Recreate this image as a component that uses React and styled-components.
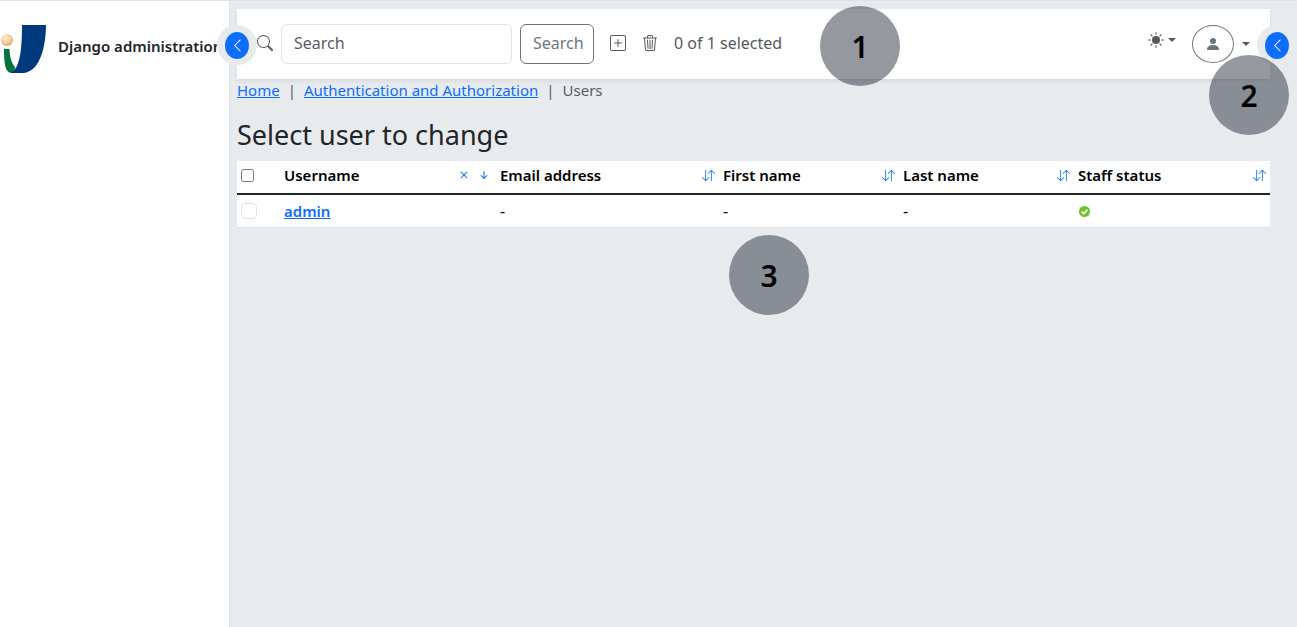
import React from "react";
import styled, { createGlobalStyle, css } from "styled-components";
import {
  BsArrowDownShort,
  BsArrowDownUp,
  BsChevronLeft,
  BsPersonFill,
  BsPlusSquare,
  BsSearch,
  BsSunFill,
  BsTrash3,
  BsX,
} from "react-icons/bs";

const GlobalStyle = createGlobalStyle`
  *, *::before, *::after { box-sizing: border-box; }
  body {
    margin: 0;
    background: #e8ebee;
    color: #212529;
    font-family: "Noto Sans", "Open Sans", sans-serif;
    font-size: 16px;
    line-height: 24px;
  }
  a { color: #0d6efd; }
  button, input { font: inherit; }
`;

const Page = styled.div`
  display: flex;
  min-height: 100vh;
  border-top: 1px solid #dee2e6;
`;

const Sidebar = styled.aside`
  position: relative;
  flex: 0 0 230px;
  background: #fff;
  border-right: 1px solid #dee2e6;
`;

const Brand = styled.a`
  display: flex;
  align-items: center;
  gap: 12px;
  padding-top: 24px;
  overflow: hidden;
  color: #212529;
  font-weight: 600;
  font-size: 15px;
  text-decoration: none;
  white-space: nowrap;
`;

const BrandName = styled.span`
  padding-bottom: 6px;
`;

const Logo = styled.svg`
  flex: none;
  width: 46px;
  height: 48px;
`;

const Toggle = styled.button`
  position: absolute;
  z-index: 2;
  top: 24px;
  right: ${(p) => (p.$side === "left" ? "-28px" : "0")};
  display: grid;
  place-items: center;
  width: 40px;
  height: 40px;
  padding: 0;
  border: 0;
  border-radius: 50%;
  background: #e8ebee;
  color: #fff;
`;

const ToggleDisc = styled.span`
  display: grid;
  place-items: center;
  width: 24px;
  height: 27px;
  border-radius: 50%;
  background: #0d6efd;
`;

const Main = styled.main`
  position: relative;
  flex: 1;
  min-width: 0;
  padding: 8px 27px 0 7px;
`;

const Toolbar = styled.header`
  display: flex;
  align-items: center;
  gap: 16px;
  height: 70px;
  padding: 0 20px;
  background: #fff;
  color: #55595c;
  box-shadow: 0 2px 4px rgba(0, 0, 0, 0.08);
`;

const SearchForm = styled.form`
  display: flex;
  align-items: center;
  gap: 8px;
`;

const SearchLabel = styled.label`
  display: flex;
  padding-bottom: 2px;
`;

const control = css`
  height: 40px;
  padding: 0 12px 2px;
  border-radius: 6px;
  background: #fff;
`;

const SearchInput = styled.input`
  ${control}
  width: 231px;
  border: 1px solid #dee2e6;
  &::placeholder { color: #595c5f; opacity: 1; }
`;

const SearchButton = styled.button`
  ${control}
  width: 74px;
  border: 1px solid #6c757d;
  color: #6c757d;
`;

const IconButton = styled.button`
  display: flex;
  align-items: center;
  padding: 0 0 2px;
  border: 0;
  background: none;
  color: inherit;
`;

const SelectionCount = styled.span`
  padding-bottom: 2px;
`;

const Menus = styled.div`
  display: flex;
  align-items: center;
  gap: 16px;
  margin-left: auto;
`;

const ThemeButton = styled(IconButton)`
  gap: 4px;
  padding-bottom: 8px;
`;

const UserButton = styled(IconButton)`
  gap: 8px;
  padding-bottom: 0;
`;

const Avatar = styled.span`
  display: grid;
  place-items: center;
  width: 42px;
  height: 38px;
  border: 1px solid #6c757d;
  border-radius: 50%;
  color: #6c757d;
`;

const Caret = styled.span`
  border-top: 4px solid #55595c;
  border-right: 4px solid transparent;
  border-left: 4px solid transparent;
`;

const Breadcrumb = styled.nav`
  display: flex;
  gap: 8px;
  margin-bottom: 18px;
  color: #595c5f;
  font-size: 15px;
  line-height: 22px;
`;

const Title = styled.h1`
  margin: 0 0 10px;
  font-size: 27px;
  font-weight: 400;
  line-height: 32px;
`;

const Table = styled.table`
  width: 100%;
  table-layout: fixed;
  border-collapse: separate;
  border-spacing: 0;
  background: #fff;
  color: #000;
`;

const Col = styled.col`
  width: ${(p) => p.$width};
`;

const HeadCell = styled.th`
  height: 34px;
  padding: 2px 4px 6px;
  border-bottom: 2px solid #212529;
  font-size: 15px;
  font-weight: 600;
  text-align: left;
`;

const Cell = styled.td`
  height: 33px;
  padding: 4px;
  border-bottom: 1px solid #dee2e6;
`;

const HeadContent = styled.div`
  display: flex;
  align-items: center;
  justify-content: space-between;
`;

const SortControls = styled.span`
  display: flex;
  align-items: center;
  gap: 4px;
`;

const SortLink = styled.a`
  display: flex;
`;

const HeadCheckbox = styled.input`
  display: block;
  width: 13px;
  height: 13px;
  margin: 0;
`;

const RowCheckbox = styled.input`
  appearance: none;
  display: block;
  width: 16px;
  height: 16px;
  margin: 0;
  border: 1px solid #dee2e6;
  border-radius: 4px;
  background: #fff;
`;

const UserLink = styled.a`
  font-size: 15px;
  font-weight: 600;
`;

const StatusIcon = styled.svg`
  display: block;
  width: 13px;
  height: 13px;
`;

const Marker = styled.div`
  position: absolute;
  z-index: 3;
  top: ${(p) => p.$top};
  left: ${(p) => p.$left};
  right: ${(p) => p.$right};
  width: 80px;
  height: 80px;
  border-radius: 50%;
  background: rgba(20, 28, 42, 0.45);
  color: #000;
  font-size: 30px;
  font-weight: 600;
  line-height: 82px;
  text-align: center;
`;

const columns = ["Email address", "First name", "Last name", "Staff status"];

function SortableHead({ name, sorted }) {
  return (
    <HeadCell scope="col">
      <HeadContent>
        {name}
        <SortControls>
          {sorted ? (
            <>
              <SortLink href="#clear" aria-label="Remove sorting"><BsX size={16} /></SortLink>
              <SortLink href="#sort" aria-label="Toggle sorting"><BsArrowDownShort size={16} /></SortLink>
            </>
          ) : (
            <SortLink href="#sort" aria-label={`Sort by ${name}`}><BsArrowDownUp size={13} /></SortLink>
          )}
        </SortControls>
      </HeadContent>
    </HeadCell>
  );
}

function PanelToggle({ side }) {
  return (
    <Toggle type="button" $side={side} aria-label={`Toggle ${side} panel`}>
      <ToggleDisc><BsChevronLeft size={15} /></ToggleDisc>
    </Toggle>
  );
}

export default function App() {
  return (
    <>
      <GlobalStyle />
      <Page>
        <Sidebar>
          <Brand href="#home">
            <Logo viewBox="0 0 46 48" aria-hidden="true">
              <defs>
                <radialGradient id="ball" cx="0.4" cy="0.35" r="0.65">
                  <stop offset="0" stopColor="#fff2e2" />
                  <stop offset="1" stopColor="#f1ac63" />
                </radialGradient>
              </defs>
              <path d="M4 24H9.500C9.800 32 11.500 38 15 42L14 48H11C5 47 4 38 4 24Z" fill="#007539" />
              <path d="M22 0H46C45.800 26 38 47.500 23 48H10C18 45 22 32 22 0Z" fill="#003a7d" />
              <circle cx="7" cy="15" r="6" fill="url(#ball)" />
            </Logo>
            <BrandName>Django administration</BrandName>
          </Brand>
          <PanelToggle side="left" />
        </Sidebar>
        <Main>
          <Toolbar>
            <SearchForm role="search">
              <SearchLabel htmlFor="searchbar" aria-label="Search"><BsSearch size={16} /></SearchLabel>
              <SearchInput id="searchbar" type="text" placeholder="Search" />
              <SearchButton type="button">Search</SearchButton>
            </SearchForm>
            <IconButton type="button" aria-label="Add user"><BsPlusSquare size={16} /></IconButton>
            <IconButton type="button" aria-label="Delete selected"><BsTrash3 size={16} /></IconButton>
            <SelectionCount>0 of 1 selected</SelectionCount>
            <Menus>
              <ThemeButton type="button" aria-label="Theme"><BsSunFill size={16} /><Caret /></ThemeButton>
              <UserButton type="button" aria-label="Account">
                <Avatar><BsPersonFill size={16} /></Avatar>
                <Caret />
              </UserButton>
            </Menus>
          </Toolbar>
          <Breadcrumb aria-label="Breadcrumb">
            <a href="#home">Home</a>
            <span>|</span>
            <a href="#auth">Authentication and Authorization</a>
            <span>|</span>
            <span>Users</span>
          </Breadcrumb>
          <Title>Select user to change</Title>
          <Table>
            <colgroup>
              <Col $width="43px" />
              <Col $width="216px" />
              <Col $width="223px" />
              <Col $width="180px" />
              <Col $width="175px" />
              <Col $width="auto" />
            </colgroup>
            <thead>
              <tr>
                <HeadCell scope="col"><HeadCheckbox type="checkbox" aria-label="Select all users" /></HeadCell>
                <SortableHead name="Username" sorted />
                {columns.map((name) => <SortableHead key={name} name={name} />)}
              </tr>
            </thead>
            <tbody>
              <tr>
                <Cell><RowCheckbox type="checkbox" aria-label="Select admin" /></Cell>
                <Cell><UserLink href="#admin">admin</UserLink></Cell>
                <Cell>-</Cell>
                <Cell>-</Cell>
                <Cell>-</Cell>
                <Cell>
                  <StatusIcon viewBox="0 0 13 13" role="img" aria-label="True">
                    <circle cx="6.5" cy="6.500" r="5.500" fill="#70bf2b" />
                    <path d="M3.700 6.700L5.700 8.600L9.400 4.800" fill="none" stroke="#fff" strokeWidth="1.800" />
                  </StatusIcon>
                </Cell>
              </tr>
            </tbody>
          </Table>
          <PanelToggle side="right" />
          <Marker $top="5px" $left="590px">1</Marker>
          <Marker $top="54px" $right="8px">2</Marker>
          <Marker $top="234px" $left="499px">3</Marker>
        </Main>
      </Page>
    </>
  );
}
